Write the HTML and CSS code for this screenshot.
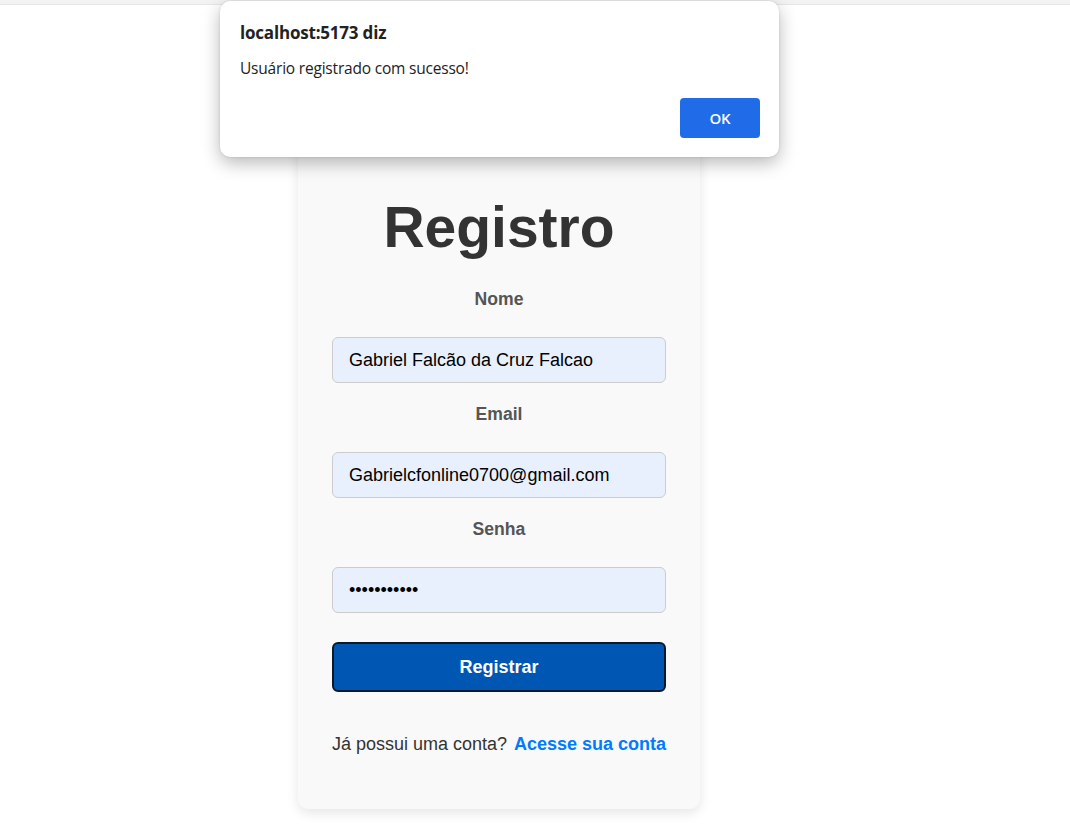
FILE: index.html
```html
<!DOCTYPE html>
<html lang="pt-BR">
<head>
<meta charset="utf-8">
<title>Registro</title>
<link rel="stylesheet" href="styles.css">
</head>
<body>
<div class="topbar"></div>
<main class="page">
  <section class="card">
    <h1 class="title">Registro</h1>
    <form class="form">
      <label class="label" for="nome">Nome</label>
      <input class="input" id="nome" type="text" value="Gabriel Falcão da Cruz Falcao">
      <label class="label" for="email">Email</label>
      <input class="input" id="email" type="email" value="Gabrielcfonline0700@gmail.com">
      <label class="label" for="senha">Senha</label>
      <input class="input" id="senha" type="password" value="12345678901">
      <button class="submit" type="button">Registrar</button>
    </form>
    <p class="footer-text"><span>Já possui uma conta?</span><a class="link" href="#">Acesse sua conta</a></p>
  </section>
</main>
<div class="dialog">
  <div class="dialog-title">localhost:5173 diz</div>
  <div class="dialog-msg">Usuário registrado com sucesso!</div>
  <div class="dialog-actions"><button class="dialog-ok" type="button">OK</button></div>
</div>
</body>
</html>
```
FILE: styles.css
```css
* { box-sizing: border-box; }
html, body { margin: 0; padding: 0; background: #fff; }
body {
  font-family: "Liberation Sans", Arial, sans-serif;
  height: 831px;
  overflow: hidden;
  position: relative;
}
.topbar {
  position: absolute;
  top: 0; left: 0; right: 0;
  height: 5px;
  background: #f3f3f3;
  border-bottom: 1px solid #e6e6e6;
}
.page {
  height: 831px;
  display: flex;
  justify-content: flex-start;
  align-items: center;
  padding-left: 298px;
}
.card {
  width: 402px;
  height: 787px;
  background: #f9f9f9;
  border-radius: 10px;
  box-shadow: 0 4px 12px rgba(0,0,0,0.1);
  padding: 172px 34px 0;
  display: flex;
  flex-direction: column;
}
.title {
  margin: 0;
  font-size: 57px;
  line-height: 66px;
  font-weight: 700;
  color: #333;
  text-align: center;
}
.form {
  display: flex;
  flex-direction: column;
  margin-top: 29px;
}
.label {
  display: block;
  text-align: center;
  font-size: 17.6px;
  line-height: 20px;
  font-weight: 700;
  color: #555;
  margin-bottom: 28px;
}
.input {
  width: 100%;
  height: 46px;
  padding: 0 16px;
  font-family: "Liberation Sans", Arial, sans-serif;
  font-size: 18px;
  color: #000;
  background: #e8f0fe;
  border: 1px solid #ccc;
  border-radius: 6px;
  margin-bottom: 21px;
  outline: none;
}
.submit {
  margin-top: 8px;
  height: 50px;
  width: 100%;
  background: #0056b3;
  color: #fff;
  border: 2px solid #0b1a2b;
  border-radius: 6px;
  font-family: "Liberation Sans", Arial, sans-serif;
  font-size: 18px;
  font-weight: 700;
}
.footer-text {
  margin: 41px 0 0;
  display: flex;
  justify-content: center;
  gap: 7px;
  font-size: 18px;
  line-height: 22px;
  color: #333;
  white-space: nowrap;
}
.link {
  color: #007bff;
  font-weight: 700;
  text-decoration: none;
}
.dialog {
  position: absolute;
  top: 1px;
  left: 220px;
  width: 559px;
  height: 156px;
  background: #fff;
  border-radius: 10px;
  box-shadow: 0 6px 18px rgba(0,0,0,0.28), 0 0 2px rgba(0,0,0,0.15);
  padding: 20px 19px 0 20px;
  font-family: "Open Sans", "Noto Sans", sans-serif;
  color: #222;
}
.dialog-title {
  font-size: 17px;
  font-weight: 700;
  line-height: 24px;
  letter-spacing: -0.2px;
}
.dialog-msg {
  margin-top: 12px;
  font-size: 15.5px;
  line-height: 22px;
  letter-spacing: -0.2px;
}
.dialog-actions {
  display: flex;
  justify-content: flex-end;
  margin-top: 19px;
}
.dialog-ok {
  width: 80px;
  height: 40px;
  background: #1f6be8;
  color: #fff;
  border: none;
  border-radius: 4px;
  font-family: "Open Sans", "Noto Sans", sans-serif;
  font-size: 15px;
  font-weight: 600;
  letter-spacing: -0.3px;
}
```
